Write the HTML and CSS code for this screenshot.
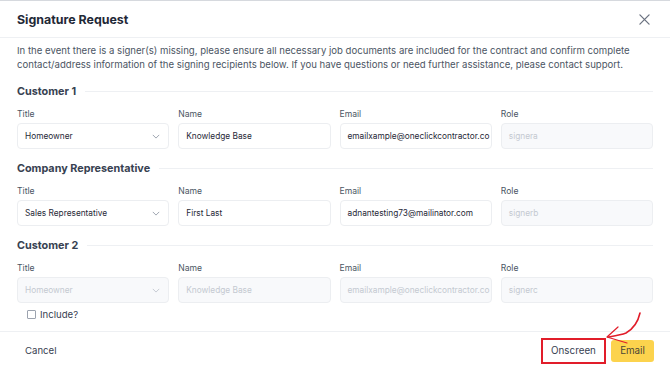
FILE: index.html
```html
<!DOCTYPE html>
<html lang="en">
<head>
  <meta charset="UTF-8" />
  <title>Signature Request</title>
  <link rel="stylesheet" href="styles.css">
</head>
<body>
  <div class="modal">
    <div class="modal-header">
      <h2>Signature Request</h2>
      <span class="close-btn">
        <svg viewBox="0 0 12 12" width="11" height="11"><path d="M1 1L11 11M11 1L1 11" stroke="#6b7280" stroke-width="1.4" stroke-linecap="round"/></svg>
      </span>
    </div>

    <div class="modal-body">
      <p class="intro">In the event there is a signer(s) missing, please ensure all necessary job documents are included for the contract and confirm complete contact/address information of the signing recipients below. If you have questions or need further assistance, please contact support.</p>

      <!-- Customer 1 -->
      <div class="section-title"><span>Customer 1</span></div>
      <div class="field-row">
        <div class="field">
          <label>Title</label>
          <div class="input select">Homeowner<svg class="chev" viewBox="0 0 10 6"><path d="M1 1l4 4 4-4" fill="none" stroke="#9ca3af" stroke-width="1.2"/></svg></div>
        </div>
        <div class="field">
          <label>Name</label>
          <div class="input">Knowledge Base</div>
        </div>
        <div class="field">
          <label>Email</label>
          <div class="input">emailxample@oneclickcontractor.co</div>
        </div>
        <div class="field">
          <label>Role</label>
          <div class="input disabled">signera</div>
        </div>
      </div>

      <!-- Company Representative -->
      <div class="section-title"><span>Company Representative</span></div>
      <div class="field-row">
        <div class="field">
          <label>Title</label>
          <div class="input select">Sales Representative<svg class="chev" viewBox="0 0 10 6"><path d="M1 1l4 4 4-4" fill="none" stroke="#9ca3af" stroke-width="1.2"/></svg></div>
        </div>
        <div class="field">
          <label>Name</label>
          <div class="input">First Last</div>
        </div>
        <div class="field">
          <label>Email</label>
          <div class="input">adnantesting73@mailinator.com</div>
        </div>
        <div class="field">
          <label>Role</label>
          <div class="input disabled">signerb</div>
        </div>
      </div>

      <!-- Customer 2 -->
      <div class="section-title"><span>Customer 2</span></div>
      <div class="field-row">
        <div class="field">
          <label>Title</label>
          <div class="input select disabled">Homeowner<svg class="chev" viewBox="0 0 10 6"><path d="M1 1l4 4 4-4" fill="none" stroke="#c4c9d1" stroke-width="1.2"/></svg></div>
        </div>
        <div class="field">
          <label>Name</label>
          <div class="input disabled">Knowledge Base</div>
        </div>
        <div class="field">
          <label>Email</label>
          <div class="input disabled">emailxample@oneclickcontractor.co</div>
        </div>
        <div class="field">
          <label>Role</label>
          <div class="input disabled">signerc</div>
        </div>
      </div>
      <div class="include-row">
        <span class="checkbox"></span> Include?
      </div>
    </div>

    <div class="modal-footer">
      <span class="cancel">Cancel</span>
      <div class="footer-actions">
        <button class="btn-onscreen">Onscreen</button>
        <button class="btn-email">Email</button>
      </div>
    </div>

    <!-- annotation arrow pointing at the Onscreen button -->
    <svg class="arrow" viewBox="0 0 50 40" width="50" height="40">
      <path d="M40 3 C38 12 33 19 26 23 C21 25 14 26 8 27" fill="none" stroke="#e11d2a" stroke-width="1.6" stroke-linecap="round"/>
      <path d="M7 27 L18 17 M7 27 L27 33" fill="none" stroke="#e11d2a" stroke-width="1.2" stroke-linecap="round"/>
    </svg>
  </div>
</body>
</html>
```

FILE: styles.css
```css
body {
  margin: 0;
  padding: 0;
  background: #fff;
  font-family: 'Inter', 'Liberation Sans', sans-serif;
  color: #374151;
}

.modal {
  width: 670px;
  height: 369px;
  box-sizing: border-box;
  border-top: 1px solid #d6d9de;
  background: #fff;
  display: flex;
  flex-direction: column;
  position: relative;
}

.modal-header {
  height: 37px;
  box-sizing: border-box;
  display: flex;
  justify-content: space-between;
  align-items: center;
  padding: 0 20px 0 17px;
  border-bottom: 1px solid #eef0f3;
}

.modal-header h2 {
  margin: 0;
  font-size: 12.4px;
  font-weight: 700;
  color: #1f2937;
}

.close-btn {
  display: flex;
  align-items: center;
}

.modal-body {
  padding: 6px 17px 0 17px;
  flex: 1;
}

.intro {
  margin: 0 0 11px 0;
  font-size: 9.6px;
  line-height: 14px;
  color: #4b5563;
}

.section-title {
  display: flex;
  align-items: center;
  height: 16px;
  margin-bottom: 9px;
  font-size: 10.8px;
  font-weight: 700;
  color: #374151;
}

.section-title::after {
  content: "";
  flex: 1;
  height: 1px;
  background: #eef0f3;
  margin-left: 9px;
}

.field-row {
  display: grid;
  grid-template-columns: repeat(4, minmax(0, 1fr));
  gap: 9px;
  margin-bottom: 11px;
}

.field label {
  display: block;
  font-size: 8.6px;
  line-height: 12px;
  color: #4b5563;
  margin-bottom: 3px;
}

.input {
  height: 26px;
  box-sizing: border-box;
  border: 1px solid #eceef1;
  border-radius: 4px;
  padding: 0 5px 0 7px;
  display: flex;
  align-items: center;
  font-size: 8.3px;
  color: #1f2937;
  white-space: nowrap;
  overflow: hidden;
}

.input.select {
  justify-content: space-between;
  padding-right: 8px;
}

.chev {
  width: 8px;
  height: 5px;
}

.input.disabled {
  background: #f8f9fb;
  color: #c4c9d1;
}

.include-row {
  margin-top: -5px;
  display: flex;
  align-items: center;
  gap: 4px;
  padding-left: 10px;
  font-size: 9.6px;
  color: #374151;
}

.checkbox {
  width: 7px;
  height: 7px;
  border: 1px solid #9ca3af;
  border-radius: 1px;
}

.modal-footer {
  height: 38px;
  box-sizing: border-box;
  border-top: 1px solid #eef0f3;
  display: flex;
  justify-content: space-between;
  align-items: center;
  padding: 0 16px 0 25px;
}

.cancel {
  font-size: 9.6px;
  color: #374151;
}

.footer-actions {
  display: flex;
  align-items: center;
  gap: 5px;
}

.btn-onscreen {
  height: 26px;
  width: 65px;
  background: #fff;
  border: 2px solid #e11d2a;
  font-family: inherit;
  font-size: 9.8px;
  color: #374151;
  padding: 0;
}

.btn-email {
  height: 22px;
  width: 43px;
  background: #fcd34d;
  border: none;
  border-radius: 3px;
  font-family: inherit;
  font-size: 9.8px;
  color: #4b4536;
  padding: 0;
}

.arrow {
  position: absolute;
  right: 20px;
  bottom: 19px;
}
```
